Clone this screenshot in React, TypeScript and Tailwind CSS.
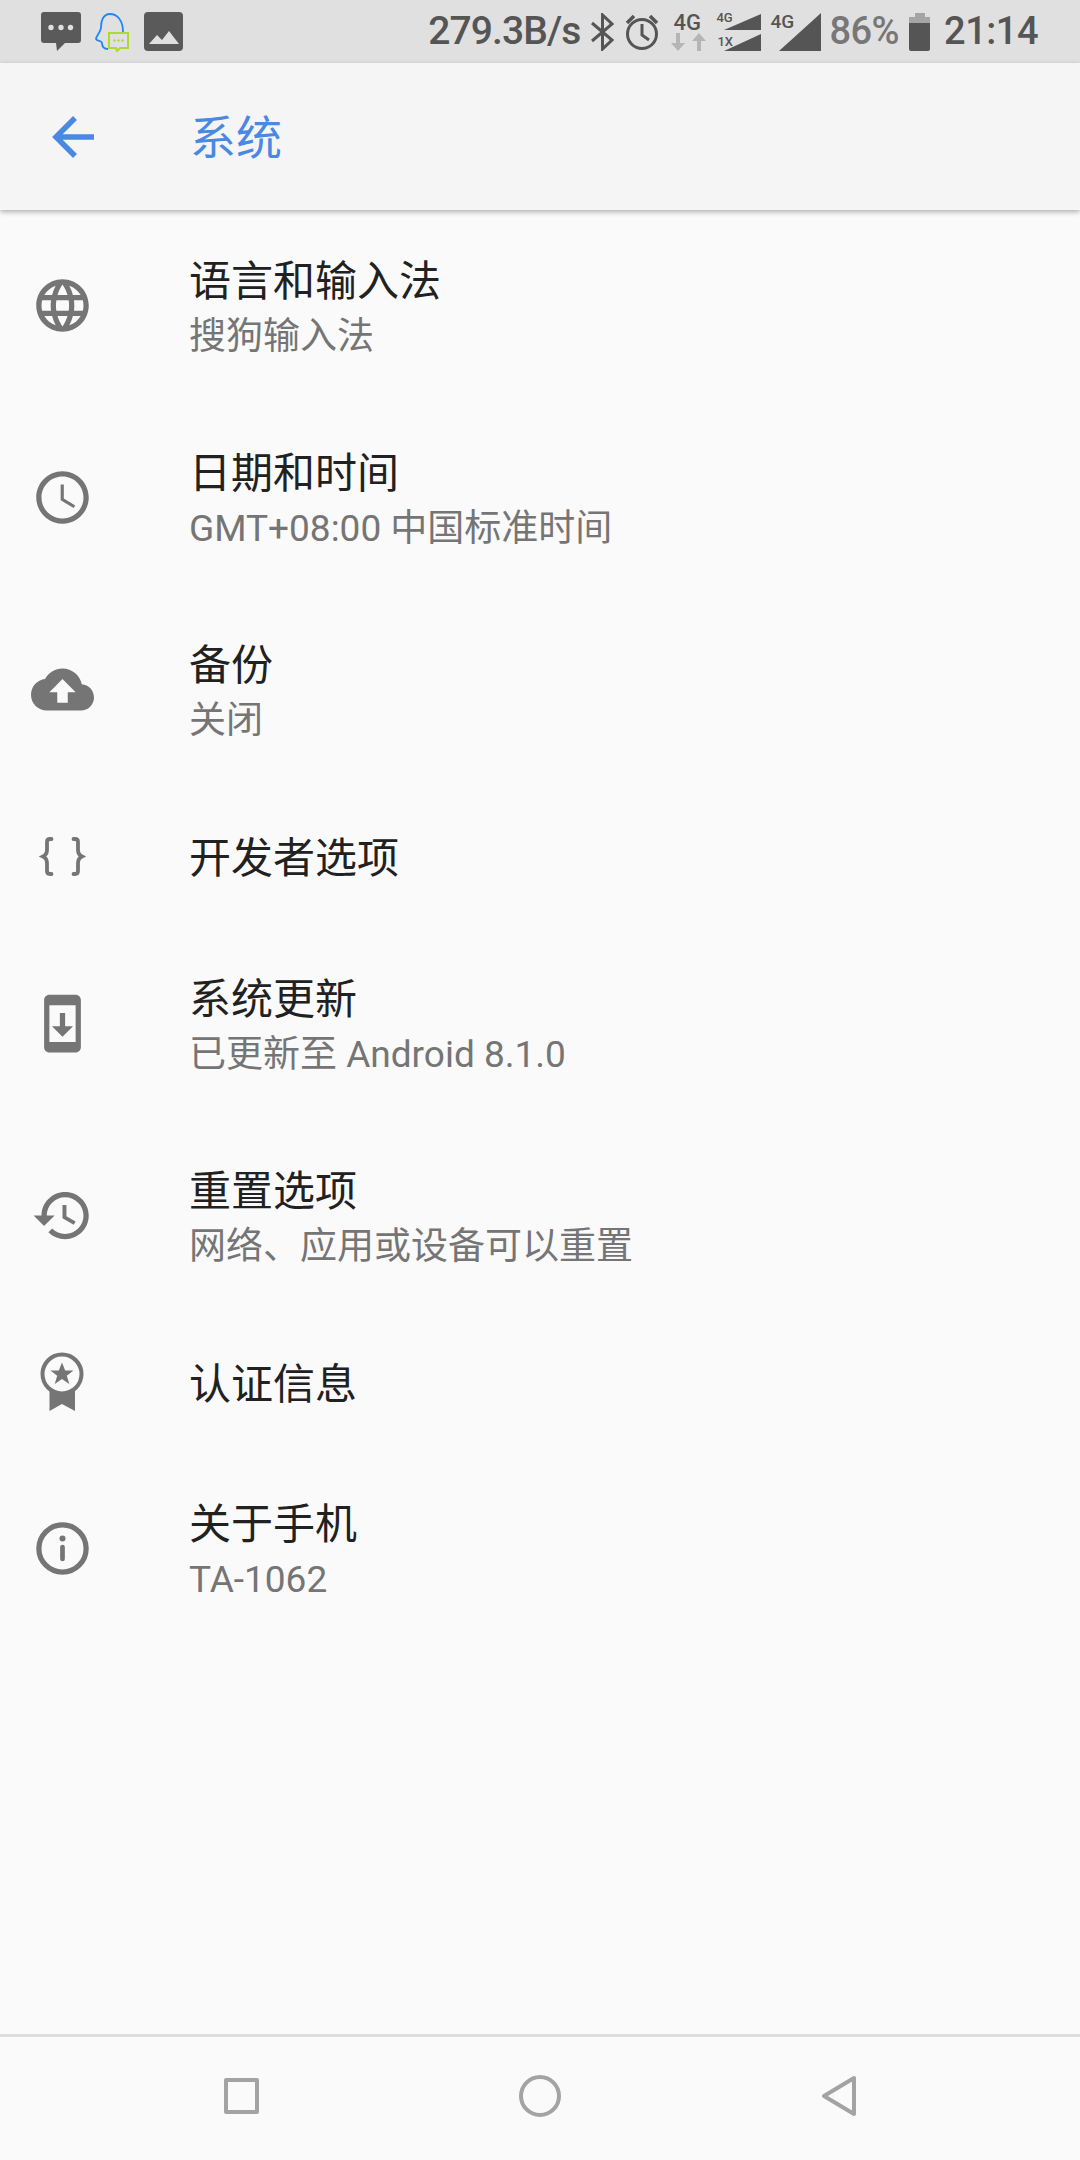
import React from 'react';

const FONT = '[font-family:Roboto,"Noto_Sans_CJK_SC",sans-serif]';

const paths = {
  language:
    'M11.99 2C6.47 2 2 6.48 2 12s4.47 10 9.99 10C17.52 22 22 17.52 22 12S17.52 2 11.99 2zm6.93 6h-2.95c-.32-1.25-.78-2.45-1.38-3.56 1.84.63 3.37 1.91 4.33 3.56zM12 4.04c.83 1.2 1.48 2.53 1.91 3.96h-3.82c.43-1.43 1.08-2.76 1.91-3.96zM4.26 14C4.1 13.36 4 12.69 4 12s.1-1.36.26-2h3.38c-.08.66-.14 1.32-.14 2 0 .68.06 1.34.14 2H4.26zm.82 2h2.95c.32 1.25.78 2.45 1.38 3.56-1.84-.63-3.37-1.9-4.33-3.56zm2.95-8H5.08c.96-1.66 2.49-2.93 4.33-3.56C8.81 5.55 8.35 6.75 8.03 8zM12 19.96c-.83-1.2-1.48-2.53-1.91-3.96h3.82c-.43 1.43-1.08 2.76-1.91 3.96zM14.34 14H9.66c-.09-.66-.16-1.32-.16-2 0-.68.07-1.35.16-2h4.68c.09.65.16 1.32.16 2 0 .68-.07 1.34-.16 2zm.25 5.56c.6-1.11 1.06-2.31 1.38-3.56h2.95c-.96 1.65-2.49 2.93-4.33 3.56zM16.36 14c.08-.66.14-1.32.14-2 0-.68-.06-1.34-.14-2h3.38c.16.64.26 1.31.26 2s-.1 1.36-.26 2h-3.38z',
  schedule:
    'M11.99 2C6.47 2 2 6.48 2 12s4.47 10 9.99 10C17.52 22 22 17.52 22 12S17.52 2 11.99 2zM12 20c-4.42 0-8-3.58-8-8s3.58-8 8-8 8 3.58 8 8-3.58 8-8 8zM12.500 7H11.300v6l4.950 3 .6-1-4.350-2.600z',
  cloud:
    'M19.35 10.04C18.67 6.59 15.64 4 12 4 9.11 4 6.6 5.64 5.35 8.04 2.34 8.36 0 10.91 0 14c0 3.31 2.69 6 6 6h13c2.76 0 5-2.24 5-5 0-2.64-2.05-4.78-4.65-4.96zM14 13v4h-4v-4H7l5-5 5 5h-3z',
  update:
    'M17 1.01L7 1c-1.1 0-2 .9-2 2v18c0 1.1.9 2 2 2h10c1.1 0 2-.9 2-2V3c0-1.1-.9-1.99-2-1.99zM17 19H7V5h10v14zm-1-6h-3V8h-2v5H8l4 4 4-4z',
  restore:
    'M13 3c-4.97 0-9 4.03-9 9H1l3.89 3.89.07.14L9 12H6c0-3.87 3.13-7 7-7s7 3.13 7 7-3.13 7-7 7c-1.93 0-3.68-.79-4.94-2.06l-1.42 1.42C8.27 19.99 10.51 21 13 21c4.97 0 9-4.03 9-9s-4.03-9-9-9zm-1 5v5l4.28 2.54.72-1.21-3.5-2.08V8H12z',
};

const Icon = ({ d }: { d: string }) => (
  <svg viewBox="0 0 24 24" className="w-[63px] h-[63px] shrink-0 fill-[#757575]">
    <path d={d} />
  </svg>
);

const BracesIcon = () => (
  <svg
    viewBox="0 0 63 63"
    className="w-[63px] h-[63px] shrink-0 fill-none stroke-[#757575] stroke-[3.800px]"
    strokeLinecap="round"
  >
    <path d="M20.500 14h-1.500c-2 0-3 1-3 3v8c0 3-1 5-4 6.500 3 1.500 4 3.500 4 6.500v8c0 2 1 3 3 3h1.500" />
    <path d="M42.500 14h1.500c2 0 3 1 3 3v8c0 3 1 5 4 6.500-3 1.500-4 3.500-4 6.500v8c0 2-1 3-3 3h-1.500" />
  </svg>
);

const CertIcon = () => (
  <svg viewBox="0 0 63 63" className="w-[63px] h-[63px] shrink-0">
    <path d="M18.500 32 L18.500 61 L31 54 L44 61 L44 32 Z" fill="#757575" />
    <circle cx="31" cy="24" r="19.500" fill="#fafafa" stroke="#757575" strokeWidth="4" />
    <path
      d="M31 12.500l3.200 8h8.300l-6.700 5.200 2.500 8.300-7.300-5-7.300 5 2.500-8.300-6.700-5.200h8.300z"
      fill="#757575"
    />
  </svg>
);

const InfoIcon = () => (
  <svg viewBox="0 0 24 24" className="w-[63px] h-[63px] shrink-0">
    <circle cx="12" cy="12" r="9" fill="none" stroke="#757575" strokeWidth="2" />
    <circle cx="12" cy="8.200" r="1.150" fill="#757575" />
    <rect x="11.100" y="10.600" width="1.800" height="6.300" rx="0.900" fill="#757575" />
  </svg>
);

const rows = [
  { h: 'h-[192px]', icon: <Icon d={paths.language} />, title: '语言和输入法', sub: '搜狗输入法' },
  { h: 'h-[192px]', icon: <Icon d={paths.schedule} />, title: '日期和时间', sub: 'GMT+08:00 中国标准时间' },
  { h: 'h-[192px]', icon: <Icon d={paths.cloud} />, title: '备份', sub: '关闭' },
  { h: 'h-[142px]', icon: <BracesIcon />, title: '开发者选项' },
  { h: 'h-[192px]', icon: <Icon d={paths.update} />, title: '系统更新', sub: '已更新至 Android 8.1.0' },
  { h: 'h-[192px]', icon: <Icon d={paths.restore} />, title: '重置选项', sub: '网络、应用或设备可以重置' },
  { h: 'h-[141px]', icon: <CertIcon />, title: '认证信息' },
  { h: 'h-[192px]', icon: <InfoIcon />, title: '关于手机', sub: 'TA-1062' },
];

const StatusLeft = () => (
  <div className="flex items-center">
    <svg viewBox="0 0 40 40" className="w-[40px] h-[40px]">
      <path d="M3 0h34a3 3 0 0 1 3 3v25a3 3 0 0 1-3 3H24l-8 8-1-8H3a3 3 0 0 1-3-3V3a3 3 0 0 1 3-3z" fill="#5a5a5a" />
      <circle cx="10" cy="15.500" r="2.700" fill="#e0e0e0" />
      <circle cx="20" cy="15.500" r="2.700" fill="#e0e0e0" />
      <circle cx="29.500" cy="15.500" r="2.700" fill="#e0e0e0" />
    </svg>
    <svg viewBox="0 0 36 40" className="w-[36px] h-[40px] ml-[14px]">
      <path
        d="M28 20C28 8 22 2 15 2 8 2 6 9 6 15c0 5-5 9-5 12 2 3 5 1 6 4 0 4 2 6 6 6"
        fill="none"
        stroke="#1b87f5"
        strokeWidth="1.800"
      />
      <path d="M14 21h19v15h-8l-3 3-1-3h-7z" fill="#e0e0e0" stroke="#b0d92f" strokeWidth="2" />
      <circle cx="19.500" cy="28.500" r="1.200" fill="#b0d92f" />
      <circle cx="23.500" cy="28.500" r="1.200" fill="#b0d92f" />
      <circle cx="27.500" cy="28.500" r="1.200" fill="#b0d92f" />
    </svg>
    <svg viewBox="0 0 39 39" className="w-[39px] h-[39px] ml-[13px]">
      <rect width="39" height="39" rx="4" fill="#5a5a5a" />
      <path d="M5 32l8-9 5 5 7-9 10 13z" fill="#e0e0e0" />
    </svg>
  </div>
);

const StatusRight = () => (
  <div className={`flex items-center text-[#555555] font-medium ${FONT}`}>
    <span className="text-[39px] leading-[63px] tracking-[-0.9px]">279.3B/s</span>
    <svg viewBox="0 0 24 38" className="w-[24px] h-[38px] ml-[10px] fill-none stroke-[#555555] stroke-[3px]">
      <path d="M2 10l20 17-9.500 9V2L22 11 2 28" />
    </svg>
    <svg viewBox="0 0 36 38" className="w-[36px] h-[38px] ml-[10px] fill-none stroke-[#555555] stroke-[3px]">
      <circle cx="18" cy="21" r="14.500" />
      <path d="M18 11v11l7 5" />
      <path d="M3 10l7-7M33 10l-7-7" strokeWidth="3.500" />
    </svg>
    <div className="relative w-[38px] h-[40px] ml-[11px]">
      <span className="absolute left-[2px] top-[0px] text-[22px] leading-[22px]">4G</span>
      <svg viewBox="0 0 38 40" className="w-[38px] h-[40px]">
        <path d="M5 21h4v10h5l-7 8-7-8h5z" fill="#b5b5b5" />
        <path d="M26 39h4V29h5l-7-8-7 8h5z" fill="#b5b5b5" />
      </svg>
    </div>
    <div className="relative w-[48px] h-[42px] ml-[5px]">
      <svg viewBox="0 0 48 42" className="w-[48px] h-[42px]">
        <path d="M10 19L47 3v16z" fill="#555555" />
        <path d="M10 40l37-17v17z" fill="#555555" />
      </svg>
      <span className="absolute left-[2px] top-[0px] text-[13px] leading-[13px]">4G</span>
      <span className="absolute left-[3px] top-[24px] text-[13px] leading-[13px]">1X</span>
    </div>
    <div className="relative w-[52px] h-[40px] ml-[8px]">
      <svg viewBox="0 0 52 40" className="w-[52px] h-[40px]">
        <path d="M9 39L51 1v38z" fill="#555555" />
      </svg>
      <span className="absolute left-[0px] top-[0px] text-[19px] leading-[19px]">4G</span>
    </div>
    <span className="text-[38px] leading-[63px] ml-[7px] tracking-[-0.5px] text-[#777777]">86%</span>
    <div className="flex flex-col items-center ml-[10px] w-[21px]">
      <div className="w-[10px] h-[4px] bg-[#a5a5a5]" />
      <div className="w-[21px] h-[6px] bg-[#a5a5a5]" />
      <div className="w-[21px] h-[28px] bg-[#555555] rounded-b-[2px]" />
    </div>
    <span className="text-[38px] leading-[63px] ml-[14px] tracking-[-0.5px]">21:14</span>
  </div>
);

const App: React.FC = () => {
  return (
    <div className={`w-[1080px] h-[2160px] flex flex-col bg-[#fafafa] overflow-hidden ${FONT}`}>
      {/* status bar */}
      <div className="h-[63px] shrink-0 bg-[#e0e0e0] flex items-center justify-between pl-[41px] pr-[42px]">
        <StatusLeft />
        <StatusRight />
      </div>

      {/* app bar */}
      <div className="relative z-10 h-[147px] shrink-0 bg-[#f5f5f5] shadow-[0_2px_5px_rgba(0,0,0,0.3)] flex items-center">
        <svg viewBox="0 0 44 44" className="w-[44px] h-[44px] ml-[52px] fill-none stroke-[#4a89e3] stroke-[5.500px]">
          <path d="M42 22H4M23 3L4 22l19 19" />
        </svg>
        <span className="ml-[94px] pt-[4px] text-[46px] text-[#4a89e3]">系统</span>
      </div>

      {/* list */}
      <div className="flex-1 -mt-[1px]">
        {rows.map((r) => (
          <div key={r.title} className={`flex items-center pl-[31px] gap-[95px] ${r.h}`}>
            {r.icon}
            {r.sub ? (
              <div className="pt-[8px]">
                <div className="text-[42px] leading-[54px] text-[#212121]">{r.title}</div>
                <div className="text-[37px] leading-[55px] text-[#757575]">{r.sub}</div>
              </div>
            ) : (
              <div className="pt-[6px] text-[42px] leading-[54px] text-[#212121]">{r.title}</div>
            )}
          </div>
        ))}
      </div>

      {/* nav bar */}
      <div className="h-[126px] shrink-0 border-t-[3px] border-[#dddddd] flex items-center justify-center gap-[260px] pb-[5px]">
        <div className="w-[35px] h-[36px] border-[4px] border-[#a3a3a3] rounded-[2px]" />
        <div className="w-[42px] h-[42px] border-[4px] border-[#a3a3a3] rounded-full" />
        <svg viewBox="0 0 36 42" className="w-[36px] h-[42px] fill-none stroke-[#a3a3a3] stroke-[4px]">
          <path strokeLinejoin="round" d="M33 3v36L3 21z" />
        </svg>
      </div>
    </div>
  );
};

export default App;
